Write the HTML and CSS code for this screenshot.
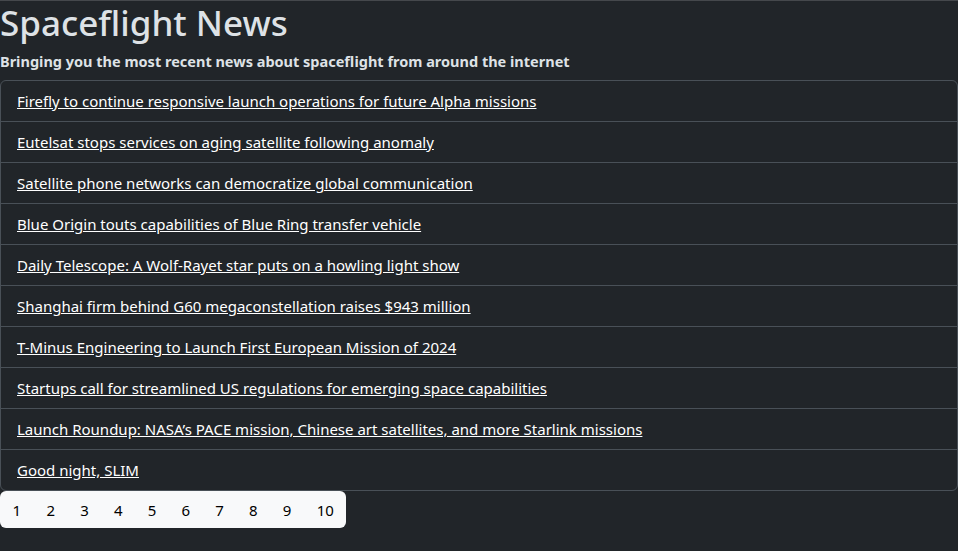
FILE: index.html
```html
<!DOCTYPE html>
<html lang="en">
<head>
<meta charset="utf-8">
<title>Spaceflight News</title>
<link rel="stylesheet" href="styles.css">
</head>
<body>
<div class="page">
  <h1 class="title">Spaceflight News</h1>
  <h6 class="subtitle">Bringing you the most recent news about spaceflight from around the internet</h6>
  <ul class="news-list">
    <li class="news-item"><a href="#">Firefly to continue responsive launch operations for future Alpha missions</a></li>
    <li class="news-item"><a href="#">Eutelsat stops services on aging satellite following anomaly</a></li>
    <li class="news-item"><a href="#">Satellite phone networks can democratize global communication</a></li>
    <li class="news-item"><a href="#">Blue Origin touts capabilities of Blue Ring transfer vehicle</a></li>
    <li class="news-item"><a href="#">Daily Telescope: A Wolf-Rayet star puts on a howling light show</a></li>
    <li class="news-item"><a href="#">Shanghai firm behind G60 megaconstellation raises $943 million</a></li>
    <li class="news-item"><a href="#">T-Minus Engineering to Launch First European Mission of 2024</a></li>
    <li class="news-item"><a href="#">Startups call for streamlined US regulations for emerging space capabilities</a></li>
    <li class="news-item"><a href="#">Launch Roundup: NASA’s PACE mission, Chinese art satellites, and more Starlink missions</a></li>
    <li class="news-item"><a href="#">Good night, SLIM</a></li>
  </ul>
  <nav class="pagination">
    <span class="page-num">1</span>
    <span class="page-num">2</span>
    <span class="page-num">3</span>
    <span class="page-num">4</span>
    <span class="page-num">5</span>
    <span class="page-num">6</span>
    <span class="page-num">7</span>
    <span class="page-num">8</span>
    <span class="page-num">9</span>
    <span class="page-num">10</span>
  </nav>
</div>
</body>
</html>
```
FILE: styles.css
```css
html, body {
  margin: 0;
  padding: 0;
  background: #212529;
}
body {
  min-height: 100vh;
  box-sizing: border-box;
  border-top: 1px solid #45484c;
  font-family: "Noto Sans", "Open Sans", sans-serif;
  color: #dee2e6;
  font-size: 16px;
}
.page {
  display: flex;
  flex-direction: column;
  align-items: flex-start;
}
.title {
  margin: 0 0 7px 0;
  font-size: 35px;
  line-height: 44px;
  font-weight: 500;
  color: #dee2e6;
}
.subtitle {
  margin: 0 0 9px 0;
  font-size: 14.5px;
  line-height: 19px;
  font-weight: 700;
  color: #dee2e6;
}
.news-list {
  list-style: none;
  margin: 0;
  padding: 0;
  align-self: stretch;
  border: 1px solid #495057;
  border-radius: 6px;
}
.news-item {
  padding: 8px 16px;
  line-height: 24px;
  border-top: 1px solid #495057;
}
.news-item:first-child {
  border-top: none;
}
.news-item a {
  color: #ffffff;
  text-decoration: underline;
  font-size: 15px;
}
.pagination {
  display: flex;
  background: #f8f9fa;
  border-radius: 6px;
  height: 37px;
  align-items: center;
}
.page-num {
  padding: 0 12.6px;
  color: #000;
  font-size: 15px;
  line-height: 24px;
}
```
